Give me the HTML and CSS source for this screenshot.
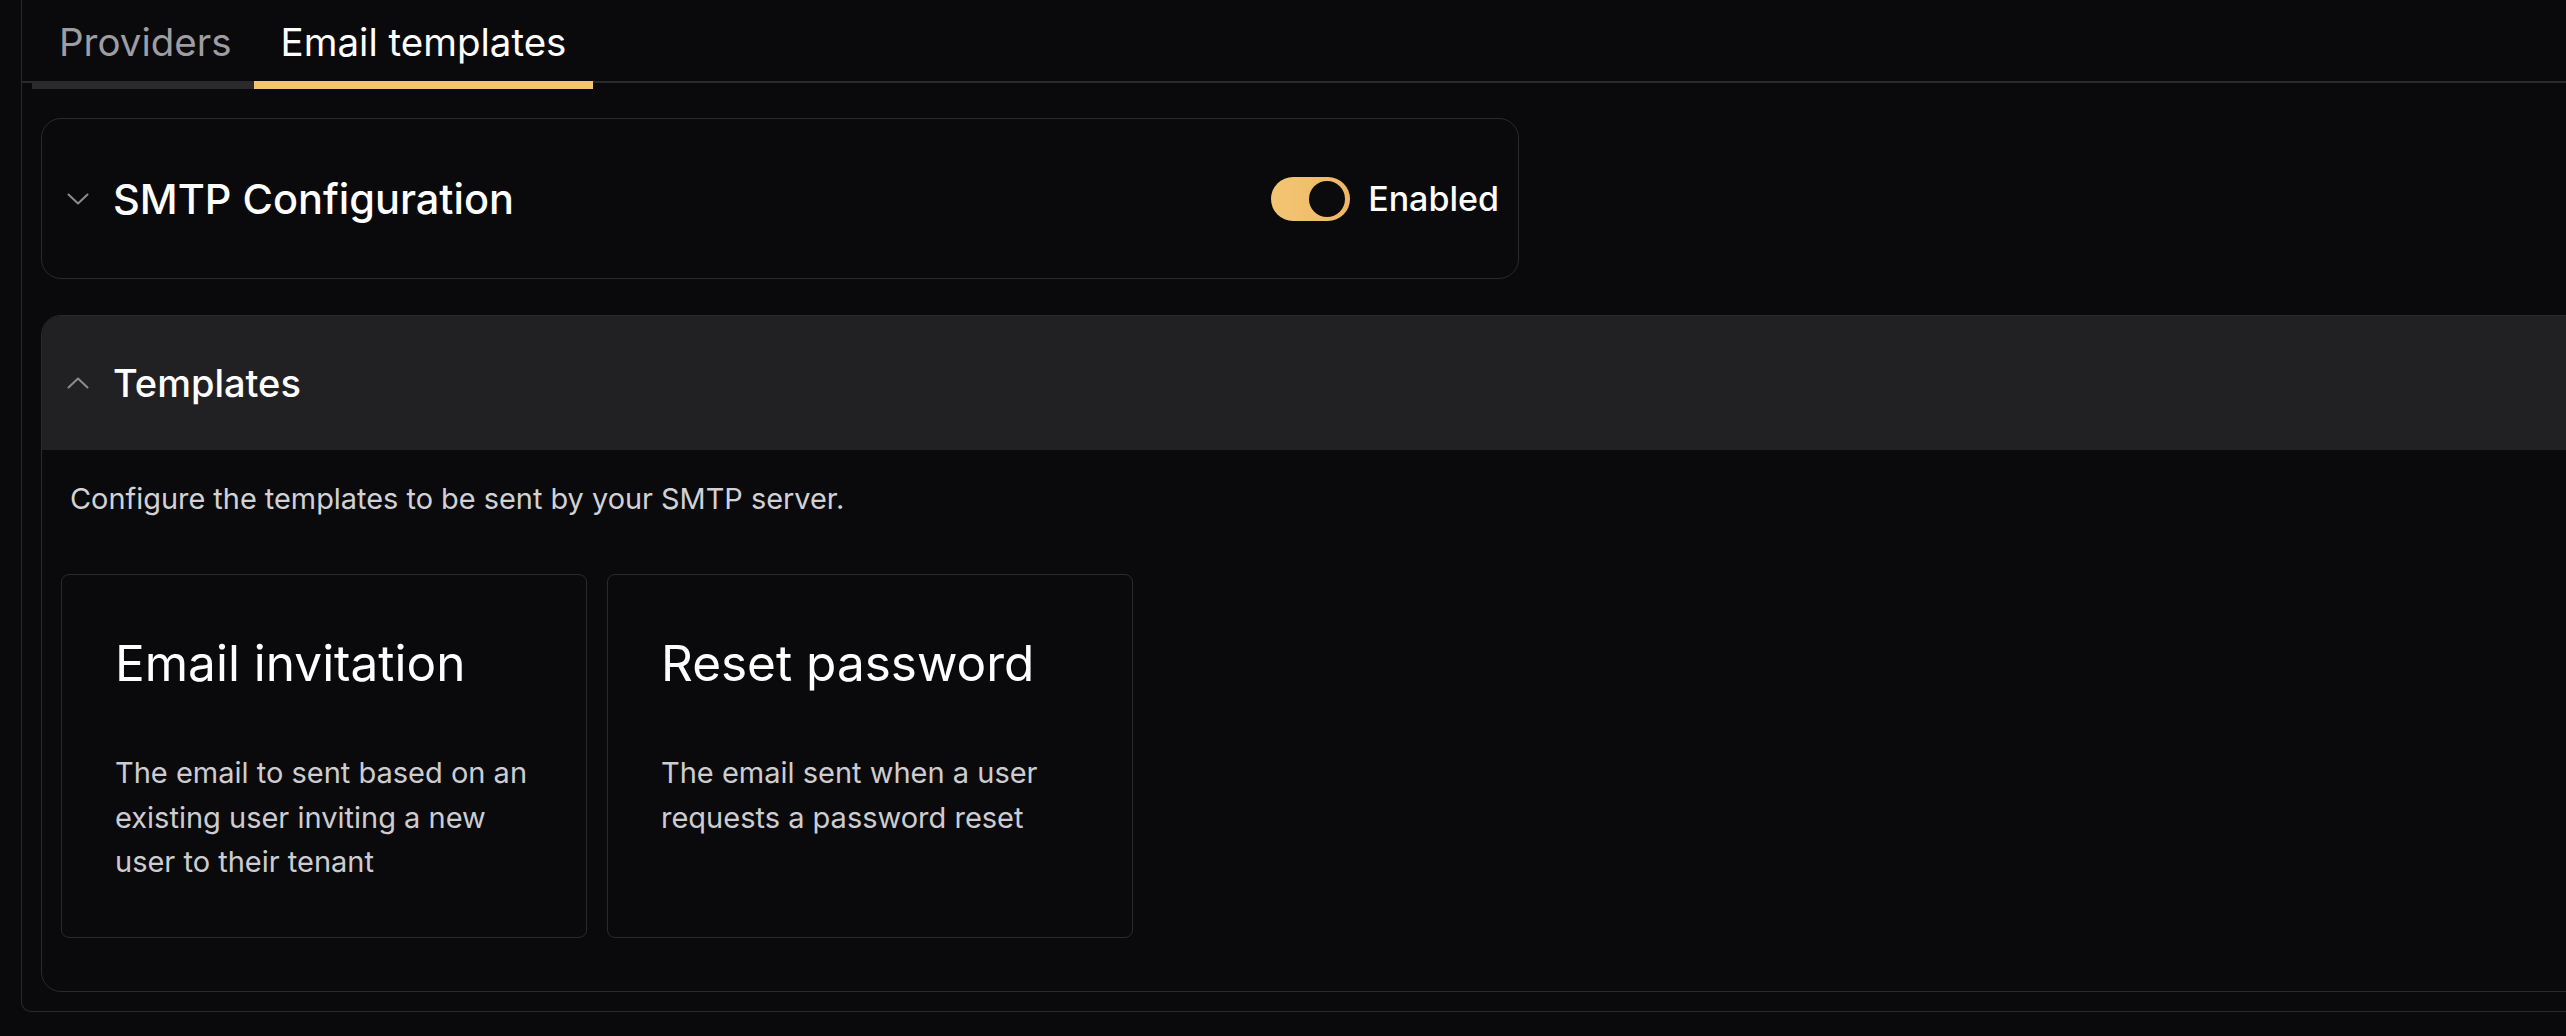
FILE: index.html
```html
<!DOCTYPE html>
<html lang="en">
<head>
<meta charset="utf-8">
<title>Email templates</title>
<link rel="stylesheet" href="styles.css">
</head>
<body>
<div class="panel">
  <nav class="tabs">
    <button class="tab tab-first">Providers</button>
    <button class="tab tab-active">Email templates</button>
  </nav>
  <div class="content">
    <section class="smtp">
      <div class="smtp-left">
        <svg class="chevron" viewBox="0 0 22 12" width="22" height="12"><path d="M1.5 1.5 L11 10.5 L20.5 1.5" fill="none" stroke="currentColor" stroke-width="2" stroke-linecap="round" stroke-linejoin="round"/></svg>
        <h2 class="section-title">SMTP Configuration</h2>
      </div>
      <label class="switch-row">
        <span class="switch"><span class="knob"></span></span>
        <span class="switch-label">Enabled</span>
      </label>
    </section>
    <section class="templates">
      <header class="templates-head">
        <svg class="chevron" viewBox="0 0 22 12" width="22" height="12"><path d="M1.5 10.5 L11 1.5 L20.5 10.5" fill="none" stroke="currentColor" stroke-width="2" stroke-linecap="round" stroke-linejoin="round"/></svg>
        <h2 class="section-title section-title-sm">Templates</h2>
      </header>
      <div class="templates-body">
        <p class="desc">Configure the templates to be sent by your SMTP server.</p>
        <div class="grid">
          <div class="tcard">
            <h3 class="tcard-title">Email invitation</h3>
            <p class="tcard-text">The email to sent based on an existing user inviting a new user to their tenant</p>
          </div>
          <div class="tcard">
            <h3 class="tcard-title">Reset password</h3>
            <p class="tcard-text">The email sent when a user requests a password reset</p>
          </div>
        </div>
      </div>
    </section>
  </div>
</div>
</body>
</html>
```
FILE: styles.css
```css
html, body {
  margin: 0;
  padding: 0;
  background: #0a0a0c;
  overflow: hidden;
}
body {
  font-family: Inter, "Noto Sans", sans-serif;
  color: #f4f4f5;
  width: 2566px;
  height: 1036px;
}
.panel {
  margin-left: 21px;
  width: 2700px;
  border: 1px solid #2a2a2d;
  border-top: 0;
  border-bottom-left-radius: 10px;
  box-sizing: border-box;
}
.tabs {
  display: flex;
  padding-left: 10px;
  border-bottom: 2px solid #2a2a2d;
}
.tab {
  font-family: inherit;
  font-size: 38.5px;
  line-height: 44px;
  padding: 20px 27px 17px;
  margin: 0 0 -8px 0;
  background: none;
  border: 0;
  border-bottom: 8px solid #2a2a2d;
  color: #9d9da3;
  cursor: pointer;
}
.tab-first {
  padding-right: 22px;
}
.tab-active {
  color: #ffffff;
  border-bottom-color: #f3c472;
}
.content {
  display: flex;
  flex-direction: column;
  gap: 36px;
  padding: 35px 19px 19px 19px;
}
.smtp {
  width: 1478px;
  height: 161px;
  box-sizing: border-box;
  border: 1px solid #2a2a2d;
  border-radius: 20px;
  display: flex;
  align-items: center;
  justify-content: space-between;
  padding: 0 19px 0 25px;
}
.smtp-left, .templates-head {
  display: flex;
  align-items: center;
  gap: 24px;
}
.chevron {
  color: #8b8b91;
  flex: none;
}
.section-title {
  margin: 0;
  font-size: 41.5px;
  font-weight: 500;
  line-height: 50px;
  color: #ffffff;
}
.section-title-sm {
  font-size: 38px;
}
.switch-row {
  display: flex;
  align-items: center;
  gap: 18px;
}
.switch {
  width: 79px;
  height: 44px;
  box-sizing: border-box;
  border-radius: 22px;
  background: linear-gradient(90deg, #f3c674, #eeb865);
  display: flex;
  align-items: center;
  justify-content: flex-end;
  padding: 4px 5px;
}
.knob {
  width: 36px;
  height: 36px;
  border-radius: 50%;
  background: #0b0b0d;
}
.switch-label {
  font-size: 34px;
  font-weight: 500;
  color: #ffffff;
}
.templates {
  border: 1px solid #2a2a2d;
  border-radius: 20px;
  overflow: hidden;
}
.templates-head {
  height: 134px;
  background: #212123;
  padding-left: 25px;
}
.templates-body {
  padding: 27px 19px 53px 19px;
}
.desc {
  margin: 0 0 53px 0;
  padding-left: 9px;
  font-size: 28.9px;
  line-height: 44px;
  color: #d2d2d6;
}
.grid {
  display: grid;
  grid-template-columns: 526px 526px;
  gap: 20px;
}
.tcard {
  border: 1px solid #2a2a2d;
  border-radius: 8px;
  padding: 58px 50px 52px 53px;
  box-sizing: border-box;
  height: 364px;
}
.tcard-title {
  margin: 0 0 58px 0;
  font-size: 49.5px;
  line-height: 60px;
  font-weight: 400;
  color: #ffffff;
}
.tcard-text {
  margin: 0;
  font-size: 29px;
  line-height: 44.5px;
  color: #cdcdd1;
}
```
